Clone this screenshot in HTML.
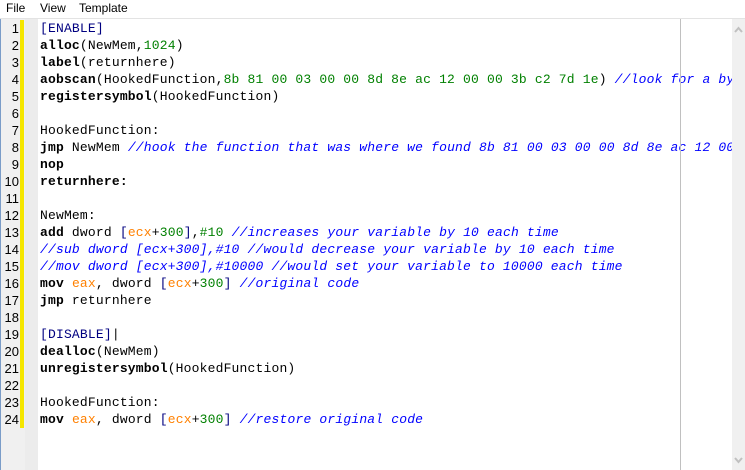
<!DOCTYPE html>
<html><head><style>
body{margin:0;width:745px;height:470px;overflow:hidden;background:#fff;position:relative;font-family:"Liberation Sans",sans-serif}
.menu{position:absolute;left:0;top:0;width:745px;height:18px;background:#fff;border-bottom:1px solid #e3e3e3;font-size:12px;color:#000}
.menu span{position:absolute;top:1px}
.gut{position:absolute;left:0;top:19px;width:38px;height:451px;background:#f0f0f0;border-left:1px solid #7a9cc8;box-sizing:border-box}
.gut2{position:absolute;left:25px;top:19px;width:13px;height:451px;background:#ececec}
.yel{position:absolute;left:20px;top:20px;width:4px;height:408px;background:#f5e600}
.nums{position:absolute;left:0;top:20px;width:19px;text-align:right;font-size:13px;line-height:17px;color:#000}
.code{position:absolute;left:40px;top:20px;width:692px;overflow:hidden;font-family:"Liberation Mono",monospace;font-size:13px;letter-spacing:0.18px;line-height:17px;white-space:pre;color:#000}
b{font-weight:bold}
.br{color:#000080}.n{color:#008000}.r{color:#ff8000}.c{color:#0000ff;font-style:italic}
.edge{position:absolute;left:680px;top:19px;width:1px;height:451px;background:#c0c0c0;z-index:2}
.sb{position:absolute;left:732px;top:19px;width:13px;height:451px;background:#f0f0f0}
</style></head><body>
<div class="menu"><span style="left:6px">File</span><span style="left:40px">View</span><span style="left:79px">Template</span></div>
<div class="gut"></div><div class="gut2"></div><div class="yel"></div>
<div class="nums">1<br>2<br>3<br>4<br>5<br>6<br>7<br>8<br>9<br>10<br>11<br>12<br>13<br>14<br>15<br>16<br>17<br>18<br>19<br>20<br>21<br>22<br>23<br>24</div>
<div class="edge"></div>
<div class="code"><span class="br">[ENABLE]</span>
<b>alloc</b>(NewMem,<span class="n">1024</span>)
<b>label</b>(returnhere)
<b>aobscan</b>(HookedFunction,<span class="n">8b 81 00 03 00 00 8d 8e ac 12 00 00 3b c2 7d 1e</span>) <span class="c">//look for a byte</span>
<b>registersymbol</b>(HookedFunction)

HookedFunction:
<b>jmp</b> NewMem <span class="c">//hook the function that was where we found 8b 81 00 03 00 00 8d 8e ac 12 00 00</span>
<b>nop</b>
<b>returnhere:</b>

NewMem:
<b>add</b> dword <span class="br">[</span><span class="r">ecx</span>+<span class="n">300</span><span class="br">]</span>,<span class="n">#10</span> <span class="c">//increases your variable by 10 each time</span>
<span class="c">//sub dword [ecx+300],#10 //would decrease your variable by 10 each time</span>
<span class="c">//mov dword [ecx+300],#10000 //would set your variable to 10000 each time</span>
<b>mov</b> <span class="r">eax</span>, dword <span class="br">[</span><span class="r">ecx</span>+<span class="n">300</span><span class="br">]</span> <span class="c">//original code</span>
<b>jmp</b> returnhere

<span class="br">[DISABLE]</span>|
<b>dealloc</b>(NewMem)
<b>unregistersymbol</b>(HookedFunction)

HookedFunction:
<b>mov</b> <span class="r">eax</span>, dword <span class="br">[</span><span class="r">ecx</span>+<span class="n">300</span><span class="br">]</span> <span class="c">//restore original code</span></div>
<div class="sb"><svg width="13" height="451" style="position:absolute;left:0;top:0"><path d="M3 13 L6.5 9 L10 13" stroke="#c0c0c0" stroke-width="2" fill="none"/><path d="M3 439 L6.5 443 L10 439" stroke="#c0c0c0" stroke-width="2" fill="none"/></svg></div>
</body></html>
